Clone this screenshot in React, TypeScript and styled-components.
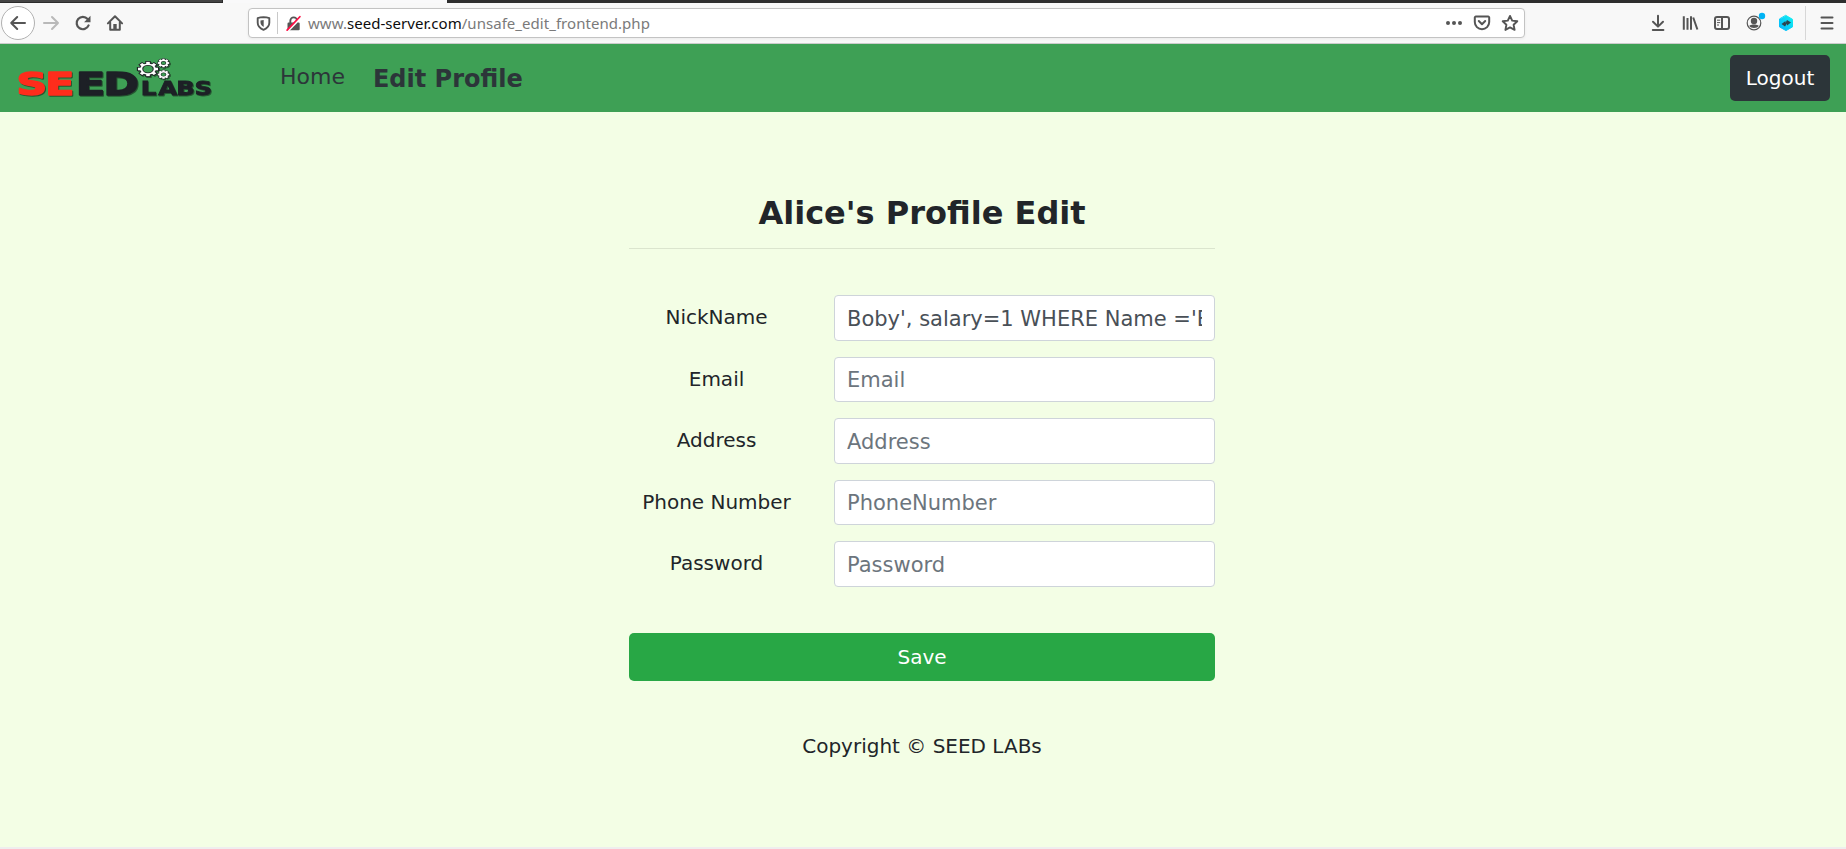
import React from "react";
import styled, { createGlobalStyle } from "styled-components";

const Global = createGlobalStyle`
  *, *::before, *::after { box-sizing: border-box; }
  html, body { margin: 0; padding: 0; }
  body {
    font-family: "DejaVu Sans", sans-serif;
    font-size: 20px;
    color: #212529;
    background: #f3fee5;
    overflow: hidden;
  }
`;

const Screen = styled.div`
  height: 849px;
  display: flex;
  flex-direction: column;
  border-bottom: 2px solid #eeeeee;
`;

const TabStrip = styled.div`
  display: flex;
  height: 3px;
  flex: none;
  background: #2e2e2e;
`;

const BackgroundTab = styled.div`
  width: 223px;
  background: #444444;
  border-bottom: 1px solid #2b2b2b;
  border-right: 1px solid #2b2b2b;
`;

const ActiveTab = styled.div`
  width: 224px;
  background: #f9f9fa;
`;

const Toolbar = styled.div`
  display: flex;
  align-items: center;
  flex: none;
  height: 41px;
  padding-left: 1px;
  background: #f8f8f8;
  border-bottom: 1px solid #cccccc;
`;

const ToolButton = styled.button<{ $width?: number }>`
  display: flex;
  align-items: center;
  justify-content: center;
  flex: none;
  width: ${(p) => p.$width ?? 32}px;
  height: 34px;
  padding: 0;
  border: 0;
  background: none;
`;

const BackButton = styled(ToolButton)`
  border: 1px solid #b1b1b1;
  border-radius: 50%;
  background: #ffffff;
`;

const AddressBar = styled.div`
  display: flex;
  align-items: center;
  width: 1277px;
  height: 30px;
  margin: 0 117px;
  background: #ffffff;
  border: 1px solid #c3c3c3;
  border-radius: 4px;
  box-shadow: 0 1px 3px rgba(0, 0, 0, 0.06);
`;

const AddressDivider = styled.span`
  width: 1px;
  height: 22px;
  background: #c9c9c9;
`;

const Address = styled.div`
  flex: 1;
  font-family: "Noto Sans", sans-serif;
  font-size: 15px;
  letter-spacing: 0.04px;
  line-height: 28px;
  white-space: nowrap;
  color: #7a7a7a;
`;

const Domain = styled.span`
  color: #0c0c0d;
`;

const MenuDivider = styled.span`
  width: 1px;
  height: 34px;
  margin: 0 5px 0 3px;
  background: #d7d7d7;
`;

const Nav = styled.nav`
  display: flex;
  align-items: center;
  flex: none;
  height: 68px;
  padding: 0 16px;
  background: #3ea055;
  color: #2c3539;
`;

const LogoLink = styled.a`
  display: block;
  width: 200px;
  height: 40px;
  margin-right: 64px;
`;

const NavLink = styled.a<{ $active?: boolean }>`
  font-size: ${(p) => (p.$active ? 24 : 22)}px;
  font-weight: ${(p) => (p.$active ? 700 : 400)};
  line-height: 32px;
  padding-top: ${(p) => (p.$active ? 2 : 0)}px;
  padding-bottom: ${(p) => (p.$active ? 0 : 3)}px;
  margin-right: 28px;
`;

const LogoutButton = styled.button`
  width: 100px;
  height: 46px;
  margin-left: auto;
  padding: 0;
  border: 0;
  border-radius: 5px;
  background: #2c3539;
  color: #ffffff;
  font: inherit;
`;

const Content = styled.main`
  width: 586px;
  margin-left: 629px;
  padding-top: 81px;
`;

const Title = styled.h1`
  margin: 0;
  height: 56px;
  padding-bottom: 16px;
  font-size: 32px;
  font-weight: 700;
  line-height: 40px;
  text-align: center;
  border-bottom: 1px solid #dbe5ce;
`;

const Form = styled.form`
  display: flex;
  flex-direction: column;
  gap: 16px;
  padding-top: 46px;
`;

const Row = styled.div`
  display: flex;
  height: 45.5px;
`;

const Label = styled.label`
  width: 175px;
  margin-right: 30px;
  line-height: 45px;
  text-align: center;
`;

const Input = styled.input`
  width: 381px;
  height: 100%;
  padding: 2px 12px 0;
  border: 1px solid #ced4da;
  border-radius: 4px;
  background: #ffffff;
  color: #495057;
  font: 21px "DejaVu Sans", sans-serif;
  outline: 0;
  &::placeholder { color: #6c757d; opacity: 1; }
`;

const SaveButton = styled.button`
  width: 100%;
  height: 48px;
  margin-top: 30px;
  padding: 0;
  border: 0;
  border-radius: 5px;
  background: #28a745;
  color: #ffffff;
  font: inherit;
`;

const Footer = styled.footer`
  margin-top: 50px;
  line-height: 30px;
  text-align: center;
`;

const LogoArt = styled.svg`
  display: block;
  overflow: visible;
  font-family: "DejaVu Sans", sans-serif;
  font-weight: 700;
  filter: drop-shadow(1px 1px 0.5px rgba(20, 40, 25, 0.6));
`;

const Icon = ({ children, size = 16, color = "#555555", width = 2 }: {
  children: React.ReactNode; size?: number; color?: string; width?: number;
}) => (
  <svg width={size} height={size} viewBox="0 0 16 16" fill="none" stroke={color}
    strokeWidth={width} strokeLinecap="round" strokeLinejoin="round" overflow="visible">
    {children}
  </svg>
);

const gearTeeth = [0, 45, 90, 135];

const Gear = ({ x, y, rx, ry, tooth, hole }: {
  x: number; y: number; rx: number; ry: number; tooth: number; hole: number;
}) => (
  <g transform={`translate(${x} ${y}) scale(${rx} ${ry})`}>
    {gearTeeth.map((a) => (
      <rect key={`o${a}`} x="-1.06" y={-tooth - 0.09} width="2.12" height={tooth * 2 + 0.18} fill="#1d2125" transform={`rotate(${a})`} />
    ))}
    <circle r="0.84" fill="#1d2125" />
    {gearTeeth.map((a) => (
      <rect key={a} x="-0.95" y={-tooth} width="1.9" height={tooth * 2} fill="#fff" transform={`rotate(${a})`} />
    ))}
    <circle r="0.74" fill="#fff" />
    <circle r={hole} fill="#1d2125" />
    <circle r={hole - 0.1} fill="#3ea055" />
  </g>
);

const Logo = () => (
  <LogoArt width="200" height="40" viewBox="16 58 200 40">
    <g fontSize="31.5" strokeWidth="1.6" strokeLinejoin="round">
      <text transform="scale(1.35 1)" x="12.2 33.6 56.3 76.6" y="95.300" fill="#1d2026" stroke="#1d2026">
        <tspan fill="#ff2d1c" stroke="#ff2d1c">SE</tspan>ED
      </text>
    </g>
    <text transform="scale(1.22 1)" x="115.300 129.800 144.500 159.500" y="95.500" fontSize="20"
      strokeWidth="0.8" stroke="#1d2026" fill="#1d2026">LABS</text>
    <Gear x={148} y={69} rx={10.5} ry={7.5} tooth={0.17} hole={0.55} />
    <Gear x={163.500} y={63} rx={6} ry={4.500} tooth={0.2} hole={0.45} />
    <Gear x={163.500} y={74.500} rx={6} ry={4.500} tooth={0.2} hole={0.45} />
  </LogoArt>
);

const fields = [
  { label: "NickName", placeholder: "NickName", value: "Boby', salary=1 WHERE Name ='Boby'#" },
  { label: "Email", placeholder: "Email" },
  { label: "Address", placeholder: "Address" },
  { label: "Phone Number", placeholder: "PhoneNumber" },
  { label: "Password", placeholder: "Password" },
];

export default function App() {
  return (
    <Screen>
      <Global />
      <TabStrip>
        <BackgroundTab />
        <ActiveTab />
      </TabStrip>
      <Toolbar>
        <BackButton $width={34} aria-label="Back">
          <Icon><path d="M15 8H1.200M7.200 2 1.200 8l6 6" /></Icon>
        </BackButton>
        <ToolButton aria-label="Forward">
          <Icon color="#b9b9b9"><path d="M1 8h14M9 2l6 6-6 6" /></Icon>
        </ToolButton>
        <ToolButton aria-label="Reload">
          <Icon>
            <path d="M13.600 10.400A6.200 6.200 0 1 1 12.600 4" strokeWidth="2.200" />
            <path d="M15.500 .8v6.400H9.100z" fill="#555555" stroke="none" />
          </Icon>
        </ToolButton>
        <ToolButton aria-label="Home">
          <Icon>
            <path d="M.9 8.400 8 1.200l7.100 7.200M3.200 7.500v7.300h9.600V7.500" />
            <path d="M8 14V9" strokeWidth="3.400" strokeLinecap="butt" />
          </Icon>
        </ToolButton>
        <AddressBar>
          <ToolButton $width={28}>
            <Icon size={15}>
              <path d="M8 1.200C6 1.300 3.600 1.700 1.800 2.300v5c0 4 3 6.200 6.200 7.500 3.200-1.300 6.200-3.500 6.200-7.500v-5C12.400 1.700 10 1.300 8 1.200z" />
              <path d="M8.200 4.200v7.600C6 10.500 4.800 9 4.800 7V4.800z" fill="#555555" stroke="none" />
            </Icon>
          </ToolButton>
          <AddressDivider />
          <ToolButton $width={30}>
            <Icon size={15}>
              <path d="M4.600 8V5a3.600 3.600 0 0 1 7.200 0v3" />
              <rect x="1.600" y="7" width="13" height="8.200" rx="1.200" fill="#555555" stroke="none" />
              <path d="M1.200 16.800 16.200 1.800" stroke="#fff" strokeWidth="2" strokeLinecap="butt" />
              <path d="M1.200 15 14.800 .8" stroke="#ff0f46" strokeWidth="1.900" />
            </Icon>
          </ToolButton>
          <Address>www.<Domain>seed-server.com</Domain>/unsafe_edit_frontend.php</Address>
          <ToolButton $width={28} aria-label="Page actions">
            <Icon>
              <g fill="#555555" stroke="none">
                <circle cx="2" cy="8" r="2" /><circle cx="8" cy="8" r="2" /><circle cx="14" cy="8" r="2" />
              </g>
            </Icon>
          </ToolButton>
          <ToolButton $width={28} aria-label="Pocket">
            <Icon>
              <path d="M1.800 1.600h12.400a1 1 0 0 1 1 1V7A7.200 7.200 0 0 1 .8 7V2.600a1 1 0 0 1 1-1z" />
              <path d="M4.800 6 8 9.200 11.200 6" />
            </Icon>
          </ToolButton>
          <ToolButton $width={28} aria-label="Bookmark">
            <Icon width={1.900}>
              <path d="M8 .9l2.200 4.700 5.100.6-3.700 3.500 1 5.200L8 12.400l-4.600 2.500 1-5.200L.7 6.200l5.100-.6z" />
            </Icon>
          </ToolButton>
        </AddressBar>
        <ToolButton aria-label="Downloads">
          <Icon><path d="M8 .8v10.400M3 6.800l5 4.800 5-4.800M2.800 15h10.600" /></Icon>
        </ToolButton>
        <ToolButton aria-label="Library">
          <Icon><path d="M1.800 1.200v13.600M5.500 3v11.800M9 1.200v13.600M11.200 2.500l4.200 12" strokeLinecap="butt" /></Icon>
        </ToolButton>
        <ToolButton aria-label="Sidebar">
          <Icon>
            <rect x="1" y="2" width="14" height="12" rx="2" />
            <path d="M8 2v12" strokeLinecap="butt" />
            <path d="M3 5.200h3.200M3 7.600h3.200M3 10h2" strokeWidth="1" strokeLinecap="butt" />
          </Icon>
        </ToolButton>
        <ToolButton aria-label="Account">
          <Icon>
            <circle cx="8" cy="8" r="6.800" strokeWidth="1.200" />
            <circle cx="8" cy="6" r="3.200" fill="#555555" stroke="none" />
            <path d="M3.300 11c1-2 8.400-2 9.400 0-1.200 2.600-8.200 2.600-9.400 0z" fill="#555555" stroke="none" />
            <circle cx="16" cy="1" r="3.200" fill="#00b3f4" stroke="none" />
          </Icon>
        </ToolButton>
        <ToolButton aria-label="Extension">
          <Icon>
            <defs>
              <linearGradient id="hex" x1="0" y1="1" x2="1" y2="0">
                <stop offset="0" stopColor="#00b4ff" /><stop offset="1" stopColor="#14f3f0" />
              </linearGradient>
            </defs>
            <path d="M8 .5l6.500 3.800v7.600L8 15.600l-6.500-3.700V4.300z" fill="url(#hex)" stroke="url(#hex)" strokeWidth="1" />
            <path d="M3.500 9l4-3v2l1.500-3 4 2.500-4 3V8.500l-2 3z" fill="#2b4450" stroke="none" />
          </Icon>
        </ToolButton>
        <MenuDivider />
        <ToolButton aria-label="Menu">
          <Icon><path d="M2.500 2.500h11M2.500 8h11M2.500 13.500h11" /></Icon>
        </ToolButton>
      </Toolbar>
      <Nav>
        <LogoLink><Logo /></LogoLink>
        <NavLink>Home</NavLink>
        <NavLink $active>Edit Profile</NavLink>
        <LogoutButton>Logout</LogoutButton>
      </Nav>
      <Content>
        <Title>Alice's Profile Edit</Title>
        <Form onSubmit={(e) => e.preventDefault()}>
          {fields.map((f) => (
            <Row key={f.label}>
              <Label>{f.label}</Label>
              <Input placeholder={f.placeholder} defaultValue={f.value} spellCheck={false} />
            </Row>
          ))}
          <SaveButton>Save</SaveButton>
        </Form>
        <Footer>Copyright © SEED LABs</Footer>
      </Content>
    </Screen>
  );
}
